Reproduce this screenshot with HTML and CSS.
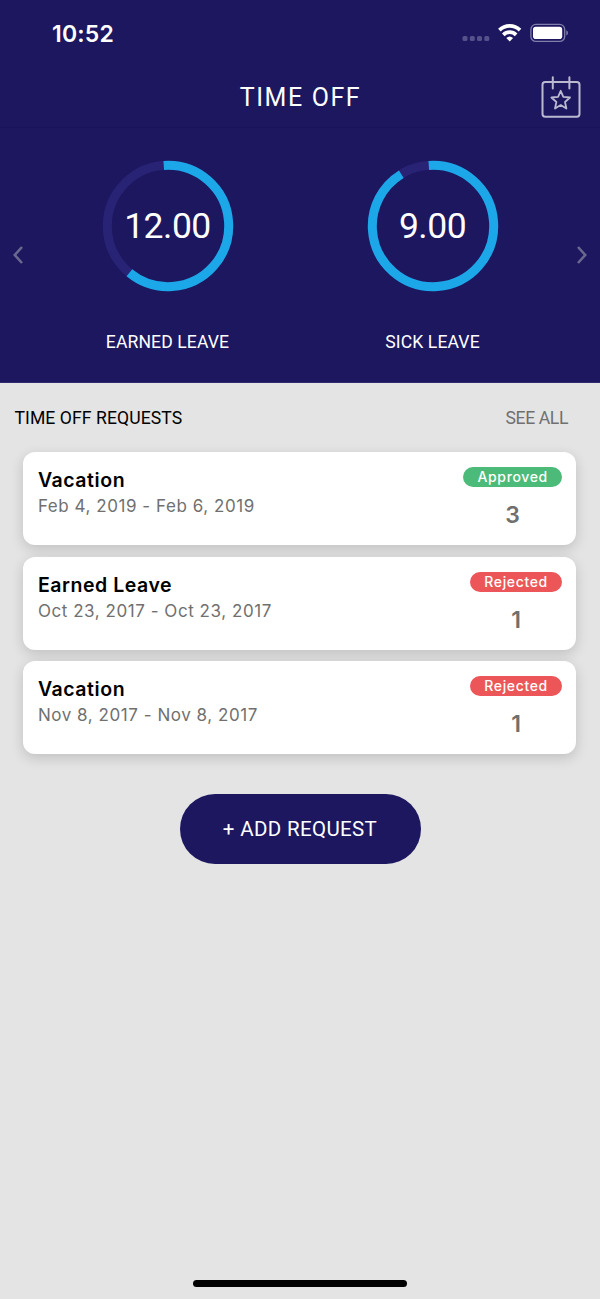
FILE: index.html
```html
<!DOCTYPE html>
<html lang="en">
<head>
    <meta charset="UTF-8">
    <meta name="viewport" content="width=device-width, initial-scale=1.0">
    <title>Time Off</title>
    <link rel="stylesheet" href="styles.css">
</head>
<body>
    <header>
        <div class="status-bar">
            <span class="clock">10:52</span>
            <svg class="status-icons" width="108" height="22" viewBox="0 0 108 22">
                <g fill="#55518a">
                    <rect x="2.5" y="14" width="5" height="5" rx="1.6"/>
                    <rect x="9.8" y="14" width="5" height="5" rx="1.6"/>
                    <rect x="17" y="14" width="5" height="5" rx="1.6"/>
                    <rect x="24.3" y="14" width="5" height="5" rx="1.6"/>
                </g>
                <g fill="none" stroke="#ffffff" stroke-width="3.7">
                    <path d="M39.4 8.1a14.6 14.6 0 0 1 20.6 0"/>
                    <path d="M43.3 12.8a9.2 9.2 0 0 1 12.8 0"/>
                </g>
                <path fill="#ffffff" d="M49.7 19.4l-3.4-3.4a5 5 0 0 1 6.8 0z"/>
                <rect x="70.9" y="2.4" width="33.8" height="17" rx="5" fill="none" stroke="#817eab" stroke-width="1.3"/>
                <rect x="73" y="4.7" width="29.2" height="12.4" rx="2.8" fill="#ffffff"/>
                <path fill="#817eab" d="M106.3 8.3q1.7.9 1.7 2.6t-1.7 2.6z"/>
            </svg>
        </div>
        <div class="nav-bar">
            <h1>TIME OFF</h1>
            <svg class="calendar" width="40" height="44" viewBox="0 0 40 44" fill="none" stroke="#bbb9d0" stroke-width="2">
                <rect x="1.5" y="7" width="37" height="34.8" rx="2.7"/>
                <path d="M11.8 2.2V13.4M28.4 2.2V13.4" stroke-linecap="round"/>
                <path stroke-width="1.8" stroke-linejoin="round" d="M19.7 15.8l2.6 6 6.7.7-5 4.5 1.4 6.5-5.7-3.4-5.7 3.4 1.4-6.5-5-4.5 6.7-.7z"/>
            </svg>
        </div>
        <div class="balances">
            <svg class="arrow" width="12" height="20" viewBox="0 0 12 20"><path d="M10 2L2.8 10l7.2 8"/></svg>
            <div class="balance-list">
                <div class="balance">
                    <div class="ring">
                        <svg width="132" height="132" viewBox="0 0 132 132">
                            <circle class="track" cx="66" cy="66" r="60.7"/>
                            <circle class="bar" cx="66" cy="66" r="60.7" pathLength="360" stroke-dasharray="223.5 360"/>
                        </svg>
                        <span>12.00</span>
                    </div>
                    <p>EARNED LEAVE</p>
                </div>
                <div class="balance">
                    <div class="ring">
                        <svg width="132" height="132" viewBox="0 0 132 132">
                            <circle class="track" cx="66" cy="66" r="60.7"/>
                            <circle class="bar" cx="66" cy="66" r="60.7" pathLength="360" stroke-dasharray="332.5 360"/>
                        </svg>
                        <span>9.00</span>
                    </div>
                    <p>SICK LEAVE</p>
                </div>
            </div>
            <svg class="arrow" width="12" height="20" viewBox="0 0 12 20"><path d="M2 2l7.2 8L2 18"/></svg>
        </div>
    </header>
    <main>
        <div class="section-title">
            <h2>TIME OFF REQUESTS</h2>
            <a class="see-all">SEE ALL</a>
        </div>
        <div class="requests">
            <div class="card">
                <div class="info">
                    <h3>Vacation</h3>
                    <p>Feb 4, 2019 - Feb 6, 2019</p>
                </div>
                <div class="status">
                    <span class="badge approved">Approved</span>
                    <span class="days">3</span>
                </div>
            </div>
            <div class="card">
                <div class="info">
                    <h3>Earned Leave</h3>
                    <p>Oct 23, 2017 - Oct 23, 2017</p>
                </div>
                <div class="status">
                    <span class="badge rejected">Rejected</span>
                    <span class="days">1</span>
                </div>
            </div>
            <div class="card">
                <div class="info">
                    <h3>Vacation</h3>
                    <p>Nov 8, 2017 - Nov 8, 2017</p>
                </div>
                <div class="status">
                    <span class="badge rejected">Rejected</span>
                    <span class="days">1</span>
                </div>
            </div>
        </div>
        <button class="add">+ ADD REQUEST</button>
    </main>
    <div class="home-indicator"></div>
</body>
</html>
```
FILE: styles.css
```css
* {
    box-sizing: border-box;
}
body {
    margin: 0;
    height: 1299px;
    display: flex;
    flex-direction: column;
    background-color: #e4e4e4;
    color: #000000;
    font-family: Roboto, sans-serif;
}
h1, h2, h3, p {
    margin: 0;
    font-weight: 400;
    white-space: nowrap;
}
header {
    height: 383px;
    background-color: #1c175f;
    border-bottom: 1px solid #312c70;
    color: #ffffff;
}
.status-bar {
    height: 66px;
    padding: 0 32px 0 52px;
    display: flex;
    align-items: center;
    justify-content: space-between;
}
.clock {
    padding-top: 1px;
    font-family: Inter, sans-serif;
    font-size: 23px;
    font-weight: 600;
    letter-spacing: 0.2px;
}
.nav-bar {
    height: 62px;
    padding: 0 19px 0 60px;
    display: flex;
    align-items: center;
    border-bottom: 1px solid #19145a;
}
.nav-bar h1 {
    flex: 1;
    padding-top: 2px;
    text-align: center;
    font-size: 25px;
    letter-spacing: 1.6px;
}
.balances {
    height: 254px;
    padding: 0 12px;
    display: flex;
    align-items: center;
    justify-content: space-between;
}
.arrow {
    fill: none;
    stroke: #6b688f;
    stroke-width: 2.6;
}
.balance-list {
    display: flex;
    gap: 1px;
}
.balance {
    width: 264px;
    height: 254px;
    padding-top: 32px;
    display: flex;
    flex-direction: column;
    align-items: center;
}
.ring {
    display: grid;
    place-items: center;
}
.ring svg, .ring span {
    grid-area: 1 / 1;
}
.ring circle {
    fill: none;
    stroke-width: 9;
}
.ring .track {
    stroke: #292376;
}
.ring .bar {
    stroke: #1ca7e8;
    transform: rotate(-94deg);
    transform-origin: center;
}
.ring span {
    font-size: 35.5px;
    letter-spacing: -0.5px;
}
.balance p {
    margin-top: 39px;
    font-size: 17.6px;
    line-height: 22px;
    letter-spacing: 0.1px;
}
main {
    flex: 1;
}
.section-title {
    height: 69px;
    padding: 0 32px 0 14.5px;
    display: flex;
    align-items: center;
    justify-content: space-between;
}
.section-title h2, .see-all {
    font-size: 17.6px;
}
.section-title h2 {
    letter-spacing: 0.07px;
}
.see-all {
    color: #707070;
    letter-spacing: -0.4px;
}
.requests {
    padding: 0.4px 23.6px 0 23.4px;
    display: flex;
    flex-direction: column;
    gap: 11.3px;
}
.card {
    height: 93px;
    padding: 15px 14.5px;
    display: flex;
    justify-content: space-between;
    background-color: #ffffff;
    border-radius: 12px;
    box-shadow: 0 4px 13px rgba(0, 0, 0, 0.16);
    font-family: Inter, sans-serif;
}
.card h3 {
    font-size: 19.5px;
    line-height: 26px;
    font-weight: 600;
    letter-spacing: 0.55px;
}
.card p {
    font-size: 17px;
    line-height: 26px;
    letter-spacing: 0.55px;
    color: #707070;
}
.status {
    display: flex;
    flex-direction: column;
    align-items: center;
}
.badge {
    height: 20px;
    padding: 0 14px;
    border-radius: 10px;
    font-size: 14px;
    line-height: 19px;
    font-weight: 500;
    letter-spacing: 0.65px;
    color: #ffffff;
}
.approved {
    background-color: #4cbb79;
}
.rejected {
    background-color: #ec5659;
}
.days {
    margin-top: 14px;
    font-size: 23px;
    line-height: 28px;
    font-weight: 600;
    color: #6f6f6f;
}
.add {
    display: block;
    width: 241px;
    height: 70px;
    margin: 40px auto 0;
    padding: 0;
    border: none;
    border-radius: 35px;
    background-color: #1c175f;
    color: #ffffff;
    font-family: Roboto, sans-serif;
    font-size: 20.5px;
    letter-spacing: 0.35px;
}
.home-indicator {
    width: 214px;
    height: 7px;
    margin: 0 auto 12px;
    border-radius: 4px;
    background-color: #000000;
}
```
